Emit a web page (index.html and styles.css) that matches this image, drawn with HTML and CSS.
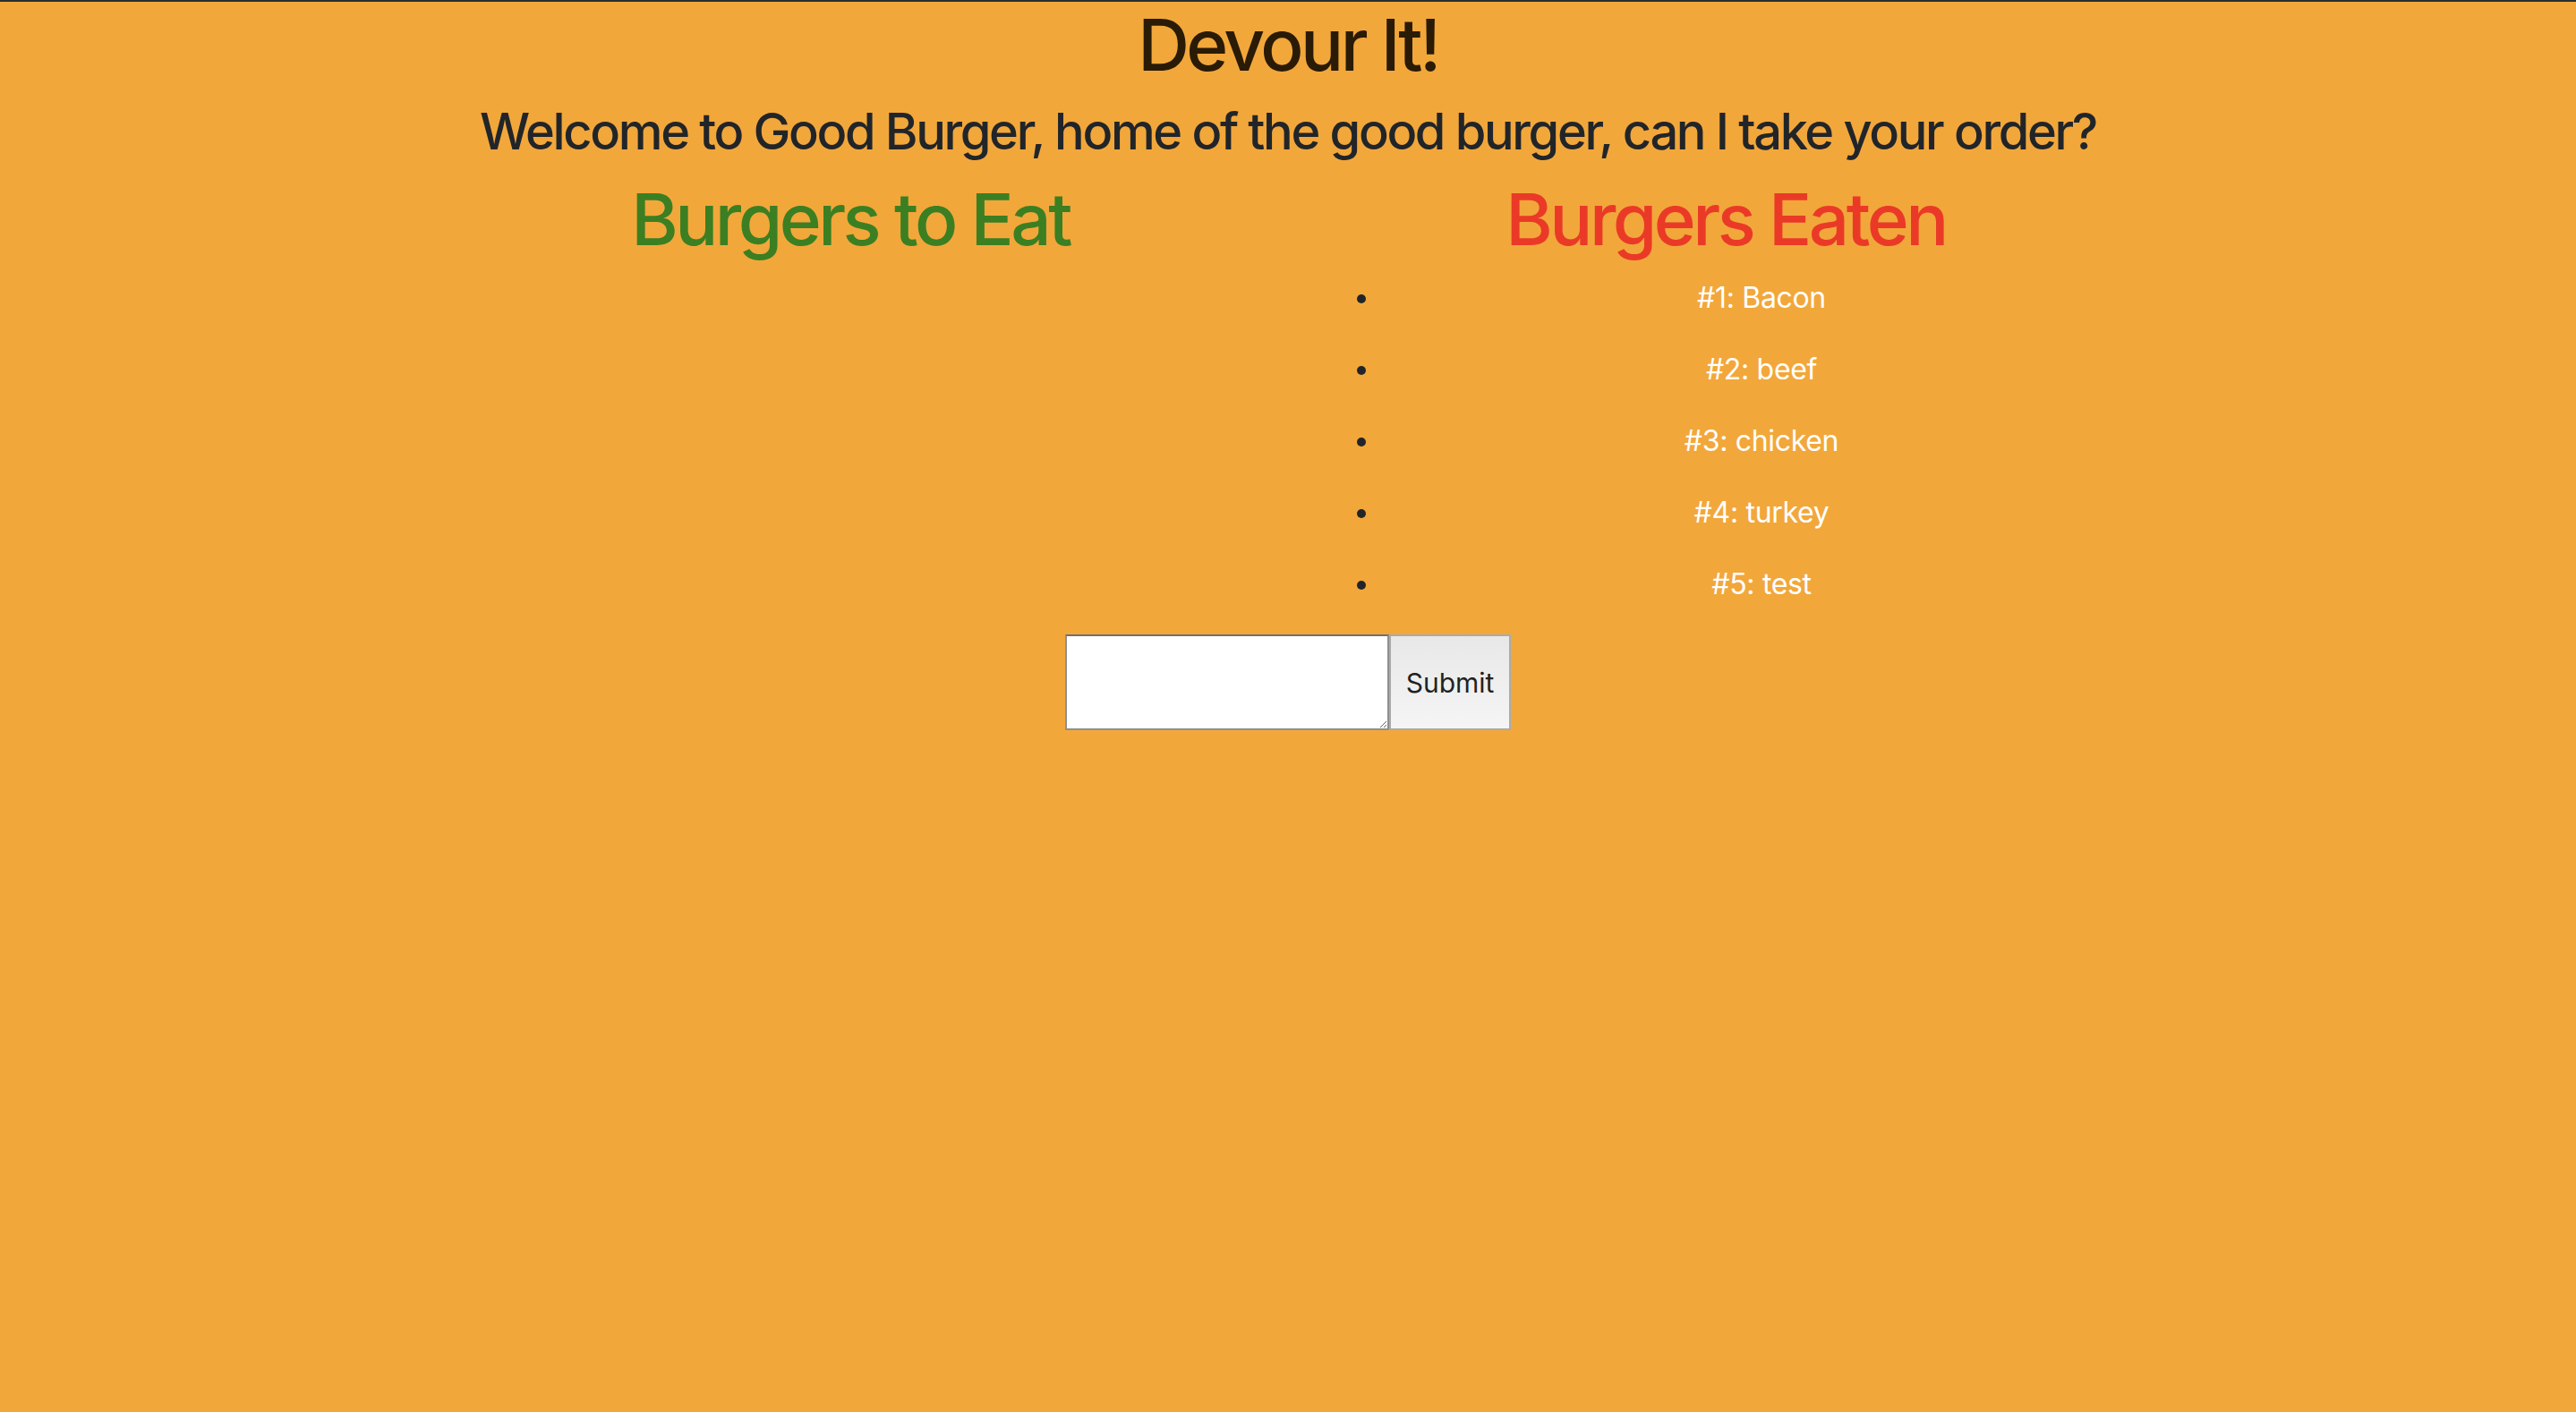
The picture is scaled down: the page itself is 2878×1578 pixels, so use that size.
FILE: index.html
```html
<!DOCTYPE html>
<html lang="en">
<head>
<meta charset="utf-8">
<title>Devour It!</title>
<link rel="stylesheet" href="styles.css">
</head>
<body>
<h1 class="title">Devour It!</h1>
<h3 class="welcome">Welcome to Good Burger, home of the good burger, can I take your order?</h3>
<div class="row">
  <div class="col">
    <h1 class="heading eat">Burgers to Eat</h1>
  </div>
  <div class="col">
    <h1 class="heading eaten">Burgers Eaten</h1>
    <ul class="eaten-list">
      <li>#1: Bacon</li>
      <li>#2: beef</li>
      <li>#3: chicken</li>
      <li>#4: turkey</li>
      <li>#5: test</li>
    </ul>
  </div>
</div>
<form class="burger-form">
  <textarea class="burger-input"></textarea>
  <button class="submit-btn" type="button">Submit</button>
</form>
</body>
</html>
```
FILE: styles.css
```css
html, body {
  margin: 0;
  padding: 0;
}
body {
  background: #f2a73b;
  border-top: 2px solid #2a2e33;
  font-family: Inter, "Noto Sans", sans-serif;
  min-height: 1576px;
  color: #212529;
}
.title {
  margin: 0 0 16px;
  font-size: 80px;
  line-height: 1.2;
  font-weight: 500;
  letter-spacing: -0.044em;
  text-align: center;
  color: #2a1b06;
}
.welcome {
  margin: 0 0 16px;
  font-size: 56px;
  line-height: 1.2;
  font-weight: 500;
  letter-spacing: -0.042em;
  text-align: center;
  color: #212529;
}
.row {
  display: flex;
  width: 1956px;
  margin: 0 auto;
}
.col {
  flex: 1 1 0;
  min-width: 0;
  padding: 0 24px;
}
.heading {
  margin: 0 0 16px;
  font-size: 80px;
  line-height: 1.2;
  font-weight: 500;
  letter-spacing: -0.044em;
  text-align: center;
}
.eat { color: #3b7f22; }
.eaten { color: #ea3a27; }
.eaten-list {
  margin: 0 0 32px;
  padding-left: 80px;
}
.eaten-list li {
  font-size: 32px;
  line-height: 48px;
  margin-bottom: 32px;
  letter-spacing: -0.01em;
  color: #ffffff;
  text-align: center;
}
.eaten-list li::marker {
  color: #212529;
}
.burger-form {
  display: flex;
  justify-content: center;
  margin: 0;
}
.burger-input {
  box-sizing: border-box;
  width: 362px;
  height: 107px;
  margin: 0;
  border: 2px solid #8f8f8f;
  border-top-color: #707070;
  background: #fff;
  font-family: Inter, sans-serif;
  font-size: 26px;
}
.submit-btn {
  box-sizing: border-box;
  width: 136px;
  height: 107px;
  margin: 0;
  border: 2px solid #ababab;
  background: linear-gradient(#e8e8e8, #f5f5f5);
  font-family: Inter, sans-serif;
  font-size: 30px;
  color: #222;
  padding: 0;
}
```
